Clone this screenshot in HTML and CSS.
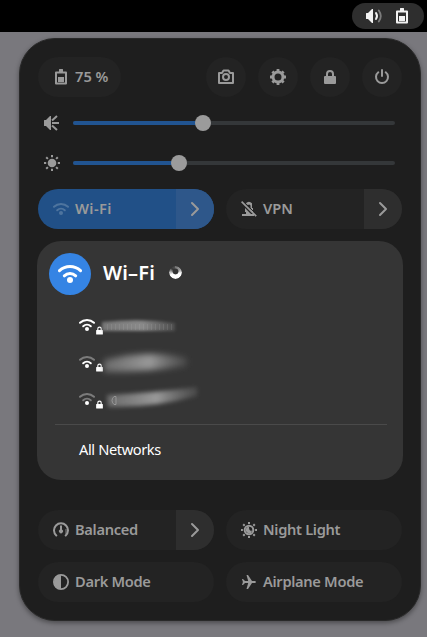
FILE: index.html
```html
<!DOCTYPE html>
<html lang="en">
<head>
<meta charset="utf-8">
<title>Quick Settings</title>
<link rel="stylesheet" href="styles.css">
</head>
<body>
<svg class="defs" aria-hidden="true">
  <symbol id="battery" viewBox="0 0 16 16"><path fill="none" stroke="currentColor" stroke-width="2" stroke-linejoin="round" d="M3 3.500h10v11H3z"/><path fill="currentColor" d="M6 .5Q6 0 6.500 0h3q.5 0 .5.500V3H6zM5 8h6v5H5z"/></symbol>
  <symbol id="lock" viewBox="0 0 16 16"><path fill="none" stroke="currentColor" stroke-width="2" d="M5 8V5a3 3 0 0 1 6 0v3"/><rect x="2" y="7" width="12" height="8" rx="1" fill="currentColor"/></symbol>
  <symbol id="arrow" viewBox="0 0 16 16"><path fill="none" stroke="currentColor" stroke-width="2" stroke-linecap="round" stroke-linejoin="round" d="M5 2l6 6-6 6"/></symbol>
  <symbol id="wifi" viewBox="0 0 16 16"><g fill="none" stroke="currentColor" stroke-width="2" stroke-linecap="round"><path class="outer" d="M1 5.800a10.200 10.200 0 0 1 14 0"/><path class="inner" d="M4.200 9.200a5.600 5.600 0 0 1 7.600 0"/></g><circle cx="8" cy="12" r="2" fill="currentColor"/></symbol>
</svg>

<header class="topbar">
  <div class="status">
    <svg class="icon" viewBox="0 0 16 16"><path fill="currentColor" d="M0 5.500Q0 5 .5 5H2l4-4h1v14H6l-4-4H.5Q0 11 0 10.500z"/><path fill="none" stroke="currentColor" stroke-width="2" stroke-linecap="round" d="M10 5q2 3 0 6"/><path class="faint" fill="none" stroke="currentColor" stroke-width="1.800" stroke-linecap="round" d="M12.800 2.500q4 5.500 0 11"/></svg>
    <svg class="icon"><use href="#battery"/></svg>
  </div>
</header>

<main class="panel">
  <div class="system">
    <div class="battery"><svg class="icon"><use href="#battery"/></svg><span>75 %</span></div>
    <div class="round"><svg class="icon" viewBox="0 0 16 16"><path fill="none" stroke="currentColor" stroke-width="2" stroke-linejoin="round" d="M1 4h3L5.500 1.500h5L12 4h3v10H1z"/><circle cx="8" cy="8" r="3" fill="none" stroke="currentColor" stroke-width="2"/></svg></div>
    <div class="round"><svg class="icon" viewBox="0 0 16 16"><circle cx="8" cy="8" r="5" fill="none" stroke="currentColor" stroke-width="3"/><g stroke="currentColor" stroke-width="2.800"><path d="M8 0v3M8 13v3M0 8h3M13 8h3M2.400 2.400l2 2M11.600 11.600l2 2M2.400 13.600l2-2M11.600 4.400l2-2"/></g></svg></div>
    <div class="round"><svg class="icon"><use href="#lock"/></svg></div>
    <div class="round"><svg class="icon" viewBox="0 0 16 16"><g fill="none" stroke="currentColor" stroke-width="2" stroke-linecap="round"><path d="M4.300 3.300a6 6 0 1 0 7.400 0"/><path d="M8 1v6"/></g></svg></div>
  </div>

  <div class="slider">
    <svg class="icon" viewBox="0 0 16 16"><path fill="currentColor" d="M0 5.500Q0 5 .5 5H2l4-4h1v14H6l-4-4H.5Q0 11 0 10.500z"/><path fill="none" stroke="currentColor" stroke-width="2" d="M8 5.500l5-4.500M8 8h7M8 10.500l5 4.500"/></svg>
    <div class="track"><div class="fill" style="width:130px"></div><div class="knob"></div></div>
  </div>
  <div class="slider">
    <svg class="icon" viewBox="0 0 16 16"><circle cx="8" cy="8" r="4.300" fill="currentColor"/><path fill="none" stroke="currentColor" stroke-width="2" d="M8 0v2.200M8 13.800V16M0 8h2.200M13.800 8H16M2.200 2.200l1.700 1.700M12.100 12.100l1.700 1.700M2.200 13.800l1.700-1.700M12.100 3.900l1.700-1.700"/></svg>
    <div class="track"><div class="fill" style="width:105.500px"></div><div class="knob"></div></div>
  </div>

  <div class="grid first">
    <div class="toggle on"><svg class="icon pale"><use href="#wifi"/></svg><span class="wide">Wi-Fi</span><div class="more"><svg class="icon"><use href="#arrow"/></svg></div></div>
    <div class="toggle"><svg class="icon" viewBox="0 0 16 16"><path fill="currentColor" d="M4.800 2.300Q8-.8 11 2.300V7h1v5L9.500 9.500V4.500Q8 2.500 7 4.300zM4 7l5 5 1 1h3v2H1v-2h4v-2H4z"/><path stroke="currentColor" stroke-width="1.700" d="M.6.6l14.600 14.600"/><path class="gap" stroke-width="1" d="M2 0l14 14"/></svg><span>VPN</span><div class="more"><svg class="icon"><use href="#arrow"/></svg></div></div>
  </div>

  <section class="menu">
    <div class="menu-head">
      <div class="badge"><svg class="wifi-big"><use href="#wifi"/></svg></div>
      <h1>Wi–Fi</h1>
      <div class="spinner"></div>
    </div>
    <div class="network"><svg class="icon"><use href="#wifi"/></svg><svg class="mini"><use href="#lock"/></svg>
      <svg class="smudge" viewBox="0 0 110 30"><defs><linearGradient id="g1"><stop stop-color="#999" stop-opacity=".65"/><stop offset=".55" stop-color="#999" stop-opacity=".85"/><stop offset="1" stop-color="#888" stop-opacity=".3"/></linearGradient><filter id="b1" x="-20%" y="-60%" width="140%" height="220%"><feGaussianBlur stdDeviation="1.500"/></filter></defs><path fill="url(#g1)" filter="url(#b1)" d="M-1 12Q38 8 72 13v8H-1z"/><path fill="none" stroke="#bbb" stroke-opacity=".16" stroke-width="6" stroke-dasharray="1 3" d="M4 17h66"/></svg></div>
    <div class="network mid"><svg class="icon"><use href="#wifi"/></svg><svg class="mini"><use href="#lock"/></svg>
      <svg class="smudge" viewBox="0 0 110 30"><defs><linearGradient id="g2"><stop stop-color="#888" stop-opacity=".65"/><stop offset=".55" stop-color="#999" stop-opacity="1"/><stop offset="1" stop-color="#777" stop-opacity=".3"/></linearGradient><filter id="b2" x="-20%" y="-60%" width="140%" height="220%"><feGaussianBlur stdDeviation="3"/></filter></defs><path fill="url(#g2)" filter="url(#b2)" d="M1 13Q44 2 84 11v8Q42 25 1 25z"/></svg></div>
    <div class="network low"><svg class="icon"><use href="#wifi"/></svg><svg class="mini"><use href="#lock"/></svg>
      <svg class="smudge" viewBox="0 0 110 30"><defs><filter id="b3" x="-20%" y="-60%" width="140%" height="220%"><feGaussianBlur stdDeviation="2.200"/></filter></defs><path fill="url(#g2)" filter="url(#b3)" d="M4 11Q50 9 94 3v9Q50 24 5 23z"/><path fill="none" stroke="#bbb" stroke-opacity=".5" d="M13 12.500h-2q-4 4 0 8h2z"/></svg></div>
    <div class="rule"></div>
    <div class="all"><span>All Networks</span></div>
  </section>

  <div class="grid">
    <div class="toggle"><svg class="icon" viewBox="0 0 16 16"><path fill="none" stroke="currentColor" stroke-width="2" stroke-linecap="round" d="M3.300 13.500a7 7 0 1 1 9.400 0"/><path fill="currentColor" d="M7 3.500h2V7.500a2 2 0 1 1-2 0z"/><path class="faint" fill="currentColor" d="M12 7h2v5h-2z"/></svg><span class="tight">Balanced</span><div class="more"><svg class="icon"><use href="#arrow"/></svg></div></div>
    <div class="toggle"><svg class="icon" viewBox="0 0 16 16"><circle cx="8" cy="8" r="4.300" fill="none" stroke="currentColor" stroke-width="2"/><path fill="currentColor" d="M8 4.800a3.200 3.200 0 1 0 3.200 3.700Q8 10 8 4.800z"/><path fill="none" stroke="currentColor" stroke-width="2" d="M8 0v1.900M8 14.100V16M0 8h1.900M14.100 8H16M2.200 2.200l1.500 1.500M12.300 12.300l1.500 1.500M2.200 13.800l1.500-1.500M12.300 3.700l1.500-1.500"/></svg><span class="tight">Night Light</span></div>
    <div class="toggle"><svg class="icon" viewBox="0 0 16 16"><circle cx="8" cy="8" r="7.100" fill="none" stroke="currentColor" stroke-width="1.800"/><path fill="currentColor" d="M8 1a7 7 0 0 0 0 14z"/></svg><span class="tight">Dark Mode</span></div>
    <div class="toggle"><svg class="icon" viewBox="0 0 16 16"><path fill="currentColor" d="M1 5h1l2 2h3.200L5.500 1H7l4 6h3q2 1 0 2h-3l-4 6H5.500L7.200 9H4l-2 2H1l.9-3z"/></svg><span class="tight">Airplane Mode</span></div>
  </div>
</main>
</body>
</html>
```

FILE: styles.css
```css
* { box-sizing: border-box; }
body {
  margin: 0;
  width: 427px;
  height: 637px;
  overflow: hidden;
  background: #79787d;
  color: #9a9a9a;
  font: 600 14.67px/20px "Noto Sans", sans-serif;
}
.defs { position: absolute; width: 0; height: 0; }
.icon { display: block; width: 16px; height: 16px; flex: none; }
.faint { opacity: .4; }
.gap { stroke: #232323; }
span, h1 { white-space: nowrap; }
span { margin-bottom: 2px; }
.wide { letter-spacing: .4px; }
.tight { letter-spacing: -.32px; }

.topbar {
  height: 32px;
  padding: 3px 3px;
  display: flex;
  justify-content: flex-end;
  background: #000;
  color: #f2f2f2;
}
.status {
  width: 72px;
  height: 26px;
  padding: 0 14px;
  display: flex;
  align-items: center;
  gap: 12px;
  border-radius: 13px;
  background: #2e2e2e;
}

.panel {
  width: 402px;
  height: 583px;
  margin: 6px 0 0 19px;
  padding: 18px;
  border: 1px solid #292929;
  border-radius: 36px;
  background: #1e1e1e;
  box-shadow: 0 2px 5px rgba(0, 0, 0, .4);
}
.system { display: flex; gap: 12px; height: 40px; }
.battery {
  width: 83px;
  margin-right: auto;
  padding-left: 15px;
  display: flex;
  align-items: center;
  gap: 6px;
  border-radius: 20px;
  background: #232323;
}
.round {
  width: 40px;
  height: 40px;
  display: grid;
  place-items: center;
  border-radius: 50%;
  background: #232323;
}

.slider {
  height: 16px;
  margin-top: 18px;
  padding: 0 7px 0 6px;
  display: flex;
  align-items: center;
  gap: 13px;
}
.slider + .slider { margin-top: 24px; }
.track {
  flex: 1;
  height: 4px;
  display: flex;
  align-items: center;
  border-radius: 2px;
  background: #343739;
}
.fill { height: 4px; border-radius: 2px; background: #215491; }
.knob { width: 16px; height: 16px; margin-left: -8px; border-radius: 50%; background: #9b9b9b; }

.grid { display: grid; grid-template-columns: 176px 176px; gap: 12px; }
.grid.first { margin-top: 18px; }
.toggle {
  height: 40px;
  padding-left: 15px;
  display: flex;
  align-items: center;
  gap: 6px;
  border-radius: 20px;
  background: #232323;
  overflow: hidden;
}
.more {
  width: 38px;
  height: 40px;
  margin-left: auto;
  display: grid;
  place-items: center;
  background: #2e2e2e;
}
.on { background: #215087; }
.on .more { background: #2e578a; }
.pale { color: #4e749e; }

.menu {
  width: 366px;
  height: 239px;
  margin: 12px -1px 30px;
  padding: 12px;
  border-radius: 24px;
  background: #353535;
  color: #fff;
}
.menu-head { height: 42px; display: flex; align-items: center; }
.badge { width: 42px; height: 42px; display: grid; place-items: center; border-radius: 50%; background: #3584e4; }
.wifi-big { width: 24px; height: 24px; }
h1 { margin: 0 0 2px 12px; width: 53px; font-size: 20px; line-height: 28px; font-weight: 600; letter-spacing: .2px; }
.spinner {
  width: 13px;
  height: 13px;
  margin: 0 0 4px 13px;
  border-radius: 50%;
  background: conic-gradient(#777, #999 15%, #fff 28%, #fff 68%, #aaa 78%, #383838 88%, #555);
  -webkit-mask: radial-gradient(circle at 50% 42%, transparent 2.6px, #000 3.3px);
  mask: radial-gradient(circle at 50% 42%, transparent 2.6px, #000 3.3px);
}
.network { height: 37px; padding-left: 30px; display: flex; align-items: center; }
.menu-head + .network { margin-top: 11px; }
.mini { width: 9px; height: 9px; margin: 11px 0 0; flex: none; }
.smudge { width: 110px; height: 30px; margin-left: -1px; overflow: visible; }
.outer { stroke-opacity: var(--outer, 1); }
.inner { stroke-opacity: var(--inner, 1); }
.mid { --outer: .35; }
.low { --outer: .35; --inner: .35; }
.rule { height: 1px; margin: 7px 4px 0 6px; background: #4a4a4a; }
.all { padding: 14px 0 0 30px; font-weight: 400; letter-spacing: -.4px; }
```
